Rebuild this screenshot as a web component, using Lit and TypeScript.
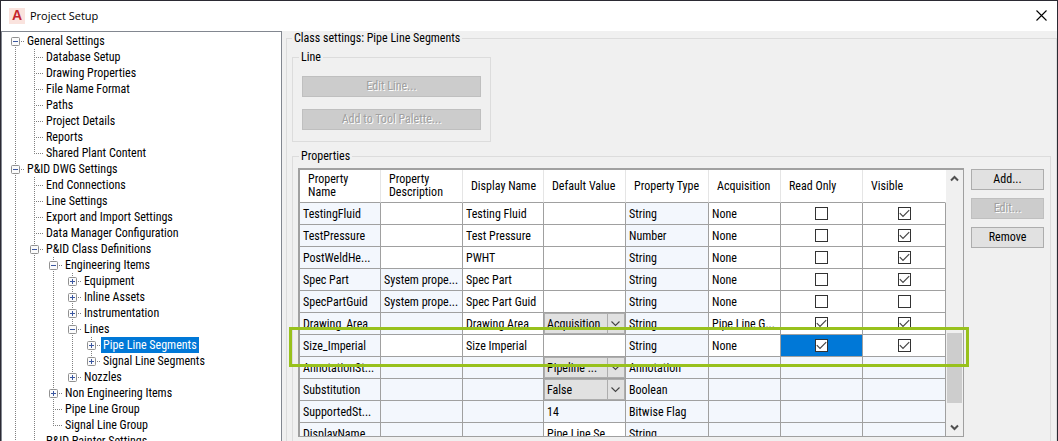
import { LitElement, html, svg, css, nothing } from 'lit';
import { customElement, state } from 'lit/decorators.js';
import { classMap } from 'lit/directives/class-map.js';

interface TreeItem {
  label: string;
  open?: boolean;
  expandable?: boolean;
  selected?: boolean;
  more?: boolean;
  children?: TreeItem[];
}

interface Choice {
  choice: string;
}

interface PropertyRow {
  name: string;
  description?: string;
  display?: string;
  value?: string | Choice;
  type: string;
  acquisition?: string;
  readOnly?: boolean;
  visible?: boolean;
  /* columns that cannot be edited, by index */
  locked: number[];
  current?: boolean;
}

const leaf = (label: string): TreeItem => ({ label });
const closed = (label: string): TreeItem => ({ label, expandable: true });

const TREE: TreeItem[] = [
  {
    label: 'General Settings',
    open: true,
    children: [
      'Database Setup',
      'Drawing Properties',
      'File Name Format',
      'Paths',
      'Project Details',
      'Reports',
      'Shared Plant Content',
    ].map(leaf),
  },
  {
    label: 'P&ID DWG Settings',
    open: true,
    more: true,
    children: [
      leaf('End Connections'),
      leaf('Line Settings'),
      leaf('Export and Import Settings'),
      leaf('Data Manager Configuration'),
      {
        label: 'P&ID Class Definitions',
        open: true,
        children: [
          {
            label: 'Engineering Items',
            open: true,
            children: [
              closed('Equipment'),
              closed('Inline Assets'),
              closed('Instrumentation'),
              {
                label: 'Lines',
                open: true,
                children: [
                  { label: 'Pipe Line Segments', expandable: true, selected: true },
                  closed('Signal Line Segments'),
                ],
              },
              closed('Nozzles'),
            ],
          },
          closed('Non Engineering Items'),
          leaf('Pipe Line Group'),
          leaf('Signal Line Group'),
        ],
      },
      { label: 'P&ID Painter Settings', more: true },
    ],
  },
];

const COLUMNS = [
  { title: 'Property Name', width: 81 },
  { title: 'Property Description', width: 82 },
  { title: 'Display Name', width: 81 },
  { title: 'Default Value', width: 82 },
  { title: 'Property Type', width: 83 },
  { title: 'Acquisition', width: 72 },
  { title: 'Read Only', width: 82 },
  { title: 'Visible', width: 83 },
];

const ROWS: PropertyRow[] = [
  { name: 'TestingFluid', display: 'Testing Fluid', type: 'String', acquisition: 'None', readOnly: false, visible: true, locked: [0, 4] },
  { name: 'TestPressure', display: 'Test Pressure', type: 'Number', acquisition: 'None', readOnly: false, visible: true, locked: [0, 4] },
  { name: 'PostWeldHe...', display: 'PWHT', type: 'String', acquisition: 'None', readOnly: false, visible: true, locked: [0, 4] },
  { name: 'Spec Part', description: 'System prope...', display: 'Spec Part', type: 'String', acquisition: 'None', readOnly: false, visible: true, locked: [0, 1, 4] },
  { name: 'SpecPartGuid', description: 'System prope...', display: 'Spec Part Guid', type: 'String', acquisition: 'None', readOnly: false, visible: false, locked: [0, 1, 4] },
  { name: 'Drawing_Area', display: 'Drawing Area', value: { choice: 'Acquisition' }, type: 'String', acquisition: 'Pipe Line G...', readOnly: true, visible: true, locked: [0, 1, 4] },
  { name: 'Size_Imperial', display: 'Size Imperial', type: 'String', acquisition: 'None', readOnly: true, visible: true, locked: [0, 4], current: true },
  { name: 'AnnotationSt...', value: { choice: 'Pipeline ...' }, type: 'Annotation', locked: [0, 1, 2, 4, 5, 6, 7] },
  { name: 'Substitution', value: { choice: 'False' }, type: 'Boolean', locked: [0, 1, 2, 4, 5, 6, 7] },
  { name: 'SupportedSt...', value: '14', type: 'Bitwise Flag', locked: [0, 1, 2, 3, 4, 5, 6, 7] },
  { name: 'DisplayName', value: 'Pipe Line Se...', type: 'String', locked: [0, 1, 2, 4, 5, 6, 7] },
];

const base = css`
  * {
    box-sizing: border-box;
  }
  button,
  select {
    font: inherit;
    color: inherit;
  }
`;

@customElement('title-bar')
class TitleBar extends LitElement {
  static styles = [
    base,
    css`
      :host {
        display: flex;
        align-items: center;
        height: 30px;
        padding: 0 5px 0 8px;
        background: #fff;
        font-family: 'Open Sans', 'Noto Sans', sans-serif;
        font-size: 11px;
      }
      .logo {
        width: 16px;
        height: 16px;
        margin-right: 5px;
        background: #fae3de;
        color: #c4262e;
        font: bold 14px/14px 'Liberation Sans', Arial, sans-serif;
        text-align: center;
      }
      .title {
        flex: 1;
        margin: 0;
        font-size: 11px;
        font-weight: 400;
        line-height: 14px;
      }
      .close {
        display: flex;
        padding: 4px 5px 6px;
        border: 0;
        background: none;
      }
    `,
  ];

  render() {
    return html`
      <span class="logo" aria-hidden="true">A</span>
      <h1 class="title">Project Setup</h1>
      <button class="close" aria-label="Close">
        <svg width="11" height="11" viewBox="0 0 11 11" stroke="#000" stroke-width="1.1" fill="none">
          <path d="M.5 .5 10.5 10.5M10.5 .5 .5 10.5" />
        </svg>
      </button>
    `;
  }
}

@customElement('settings-tree')
class SettingsTree extends LitElement {
  static styles = [
    base,
    css`
      :host {
        display: block;
        overflow: hidden;
        padding: 1px 0 0 4px;
        background: #fff;
        border: 1px solid #828790;
      }
      ul {
        margin: 0;
        padding: 0;
        list-style: none;
      }
      .row {
        display: flex;
        height: 16px;
        line-height: 16px;
        white-space: nowrap;
      }
      .guide {
        flex: none;
        width: 19px;
        height: 16px;
      }
      .dots {
        stroke: #808080;
        stroke-dasharray: 1 1;
      }
      .label {
        padding: 0 2px;
      }
      .selected {
        background: #0078d7;
        color: #fff;
      }
    `,
  ];

  private guide(item: TreeItem, first: boolean, last: boolean) {
    const box = item.open || item.expandable;
    return html`<svg class="guide" viewBox="0 0 19 16" aria-hidden="true">
      <g class="dots">
        ${first ? nothing : svg`<path d="M9.5 0V8" />`}
        ${last ? nothing : svg`<path d="M9.5 8V16" />`}
        <path d="M9 8.5H19" />
      </g>
      ${box
        ? svg`<rect x="5.5" y="4.5" width="8" height="8" rx="1" fill="#fbfbfb" stroke="#919191" />
            <path d="M7 8.5H12" stroke="#3b57a0" />`
        : nothing}
      ${item.expandable ? svg`<path d="M9.5 6V11" stroke="#3b57a0" />` : nothing}
    </svg>`;
  }

  private branch(items: TreeItem[], trail: boolean[]): unknown {
    return html`<ul>
      ${items.map((item, i) => {
        const last = i === items.length - 1 && !item.more;
        const first = i === 0 && trail.length === 0;
        return html`<li>
          <div class="row">
            ${trail.map(
              (runs) => html`<svg class="guide" viewBox="0 0 19 16" aria-hidden="true">
                ${runs ? svg`<path class="dots" d="M9.5 0V16" />` : nothing}
              </svg>`,
            )}
            ${this.guide(item, first, last)}
            <span class=${classMap({ label: true, selected: !!item.selected })}>${item.label}</span>
          </div>
          ${item.children ? this.branch(item.children, [...trail, !last]) : nothing}
        </li>`;
      })}
    </ul>`;
  }

  render() {
    return this.branch(TREE, []);
  }
}

@customElement('property-grid')
class PropertyGrid extends LitElement {
  static styles = [
    base,
    css`
      :host {
        display: flex;
        position: relative;
        height: 269px;
        border: 1px solid #a0a0a0;
        border-width: 2px 1px 1px 2px;
        background: #fff;
      }
      .viewport {
        flex: 1;
        min-width: 0;
        overflow: hidden;
      }
      table {
        width: 100%;
        table-layout: fixed;
        border-collapse: separate;
        border-spacing: 0;
      }
      th {
        height: 33px;
        padding: 0 4px 0 8px;
        border-right: 1px solid #e5e5e5;
        border-bottom: 1px solid #a0a0a0;
        font-weight: 400;
        line-height: 13px;
        text-align: left;
        vertical-align: middle;
      }
      th:last-child {
        border-right-color: #fff;
      }
      td {
        height: 22px;
        padding: 0 3px;
        border-right: 1px solid #a0a0a0;
        border-bottom: 1px solid #a0a0a0;
        line-height: 20px;
        white-space: nowrap;
        overflow: hidden;
      }
      .locked {
        background: #f3f7fd;
      }
      .tick,
      .picker {
        padding: 0;
      }
      .chosen {
        background: #0078d7;
      }
      input {
        display: block;
        appearance: none;
        width: 13px;
        height: 13px;
        margin: 0 auto;
        border: 1px solid #333;
        background: #fff;
      }
      input:checked {
        background: #fff
          url("data:image/svg+xml,%3Csvg xmlns='http://www.w3.org/2000/svg' viewBox='0 0 11 11'%3E%3Cpath d='M.8 5.2 4 8.4 10.2 2.2' fill='none' stroke='%23444' stroke-width='1.2'/%3E%3C/svg%3E");
      }
      select {
        display: block;
        appearance: none;
        width: 100%;
        height: 21px;
        padding: 0 18px 0 2px;
        border: 1px solid #adadad;
        border-radius: 0;
        background:
          url("data:image/svg+xml,%3Csvg xmlns='http://www.w3.org/2000/svg' viewBox='0 0 17 19'%3E%3Cpath d='M.5 0V19' stroke='%23adadad'/%3E%3Cpath d='M4.5 7.5 8.5 11.5 12.5 7.5' fill='none' stroke='%23444' stroke-width='1.1'/%3E%3C/svg%3E")
            right / 17px 19px no-repeat,
          #e1e1e1;
      }
      .scrollbar {
        display: flex;
        flex-direction: column;
        width: 17px;
        padding: 0 1px;
        background: #f0f0f0;
      }
      .arrow {
        display: grid;
        place-items: center;
        height: 17px;
        padding: 0;
        border: 0;
        background: none;
      }
      .track {
        flex: 1;
        display: grid;
        grid-template-rows: 146fr 70fr 16fr;
      }
      .thumb {
        grid-row: 2;
        background: #cdcdcd;
      }
      .highlight {
        position: absolute;
        top: 157px;
        left: -11px;
        right: -6px;
        height: 40px;
        border: 3px solid #98c11d;
        pointer-events: none;
      }
    `,
  ];

  @state() private rows = ROWS;

  private cellClass(row: PropertyRow, column: number, extra = '') {
    return `${extra} ${row.locked.includes(column) ? 'locked' : ''}`;
  }

  private tick(row: PropertyRow, column: number, checked: boolean | undefined, chosen: boolean) {
    return html`<td class=${this.cellClass(row, column, chosen ? 'tick chosen' : 'tick')}>
      ${checked === undefined
        ? nothing
        : html`<input
            type="checkbox"
            aria-label="${row.name} ${COLUMNS[column].title}"
            .checked=${checked}
          />`}
    </td>`;
  }

  private value(row: PropertyRow) {
    const v = row.value;
    return typeof v === 'object'
      ? html`<td class=${this.cellClass(row, 3, 'picker')}>
          <select aria-label="${row.name} default value">
            <option>${v.choice}</option>
          </select>
        </td>`
      : html`<td class=${this.cellClass(row, 3)}>${v}</td>`;
  }

  private arrow(label: string, d: string) {
    return html`<button class="arrow" aria-label=${label}>
      <svg width="9" height="7" viewBox="0 0 9 7" fill="none" stroke="#505050" stroke-width="2">
        <path d=${d} />
      </svg>
    </button>`;
  }

  render() {
    return html`
      <div class="viewport">
        <table>
          <colgroup>
            ${COLUMNS.map((c) => html`<col width=${c.width} />`)}
          </colgroup>
          <thead>
            <tr>
              ${COLUMNS.map((c) => html`<th scope="col">${c.title}</th>`)}
            </tr>
          </thead>
          <tbody>
            ${this.rows.map(
              (row) => html`<tr>
                <td class=${this.cellClass(row, 0)}>${row.name}</td>
                <td class=${this.cellClass(row, 1)}>${row.description}</td>
                <td class=${this.cellClass(row, 2)}>${row.display}</td>
                ${this.value(row)}
                <td class=${this.cellClass(row, 4)}>${row.type}</td>
                <td class=${this.cellClass(row, 5)}>${row.acquisition}</td>
                ${this.tick(row, 6, row.readOnly, !!row.current)}
                ${this.tick(row, 7, row.visible, false)}
              </tr>`,
            )}
          </tbody>
        </table>
      </div>
      <div class="scrollbar">
        ${this.arrow('Scroll up', 'M1 5.5 4.5 2 8 5.5')}
        <div class="track"><div class="thumb"></div></div>
        ${this.arrow('Scroll down', 'M1 1.5 4.5 5 8 1.5')}
      </div>
      <div class="highlight"></div>
    `;
  }
}

@customElement('app-root')
class AppRoot extends LitElement {
  static styles = [
    base,
    css`
      :host {
        display: block;
        color: #000;
        font-family: 'Roboto Condensed', 'Liberation Sans Narrow', Roboto, sans-serif;
        font-size: 12px;
      }
      .window {
        display: flex;
        flex-direction: column;
        height: 100vh;
        overflow: hidden;
        border: 1px solid #2b2a33;
        border-bottom: 0;
        background: #f0f0f0;
      }
      .body {
        flex: 1;
        display: flex;
        min-height: 0;
      }
      settings-tree {
        flex: none;
        width: 281px;
        border-bottom: 0;
      }
      .settings {
        flex: 1;
        min-width: 0;
        padding: 0 0 0 4px;
      }
      fieldset {
        min-width: 0;
        margin: 0;
        padding: 0;
        border: 1px solid #dcdcdc;
      }
      legend {
        padding: 0 2px;
        line-height: 14px;
      }
      .class-settings {
        min-height: 480px;
        padding: 5px 5px 0;
      }
      .line {
        width: 199px;
        margin-bottom: 7px;
        padding: 12px 0 11px 6px;
      }
      .stack {
        display: flex;
        flex-direction: column;
        gap: 12px;
        padding: 0 9px 0 3px;
      }
      .properties {
        min-height: 320px;
        padding: 5px 6px 0;
      }
      .columns {
        display: flex;
        gap: 7px;
        margin-left: -1px;
      }
      property-grid {
        flex: 1;
        min-width: 0;
      }
      .actions {
        flex: none;
        display: flex;
        flex-direction: column;
        gap: 8px;
        width: 73px;
        padding-top: 1px;
      }
      .button {
        height: 21px;
        padding: 0;
        border: 1px solid #adadad;
        background: #e1e1e1;
        line-height: 19px;
      }
      .button:disabled {
        border-color: #bfbfbf;
        background: #ccc;
        color: #a0a0a0;
        text-shadow: 1px 1px 0 #fff;
      }
    `,
  ];

  render() {
    return html`
      <main class="window">
        <title-bar></title-bar>
        <div class="body">
          <settings-tree></settings-tree>
          <div class="settings">
            <fieldset class="class-settings">
              <legend>Class settings: Pipe Line Segments</legend>
              <fieldset class="line">
                <legend>Line</legend>
                <div class="stack">
                  <button class="button" disabled>Edit Line...</button>
                  <button class="button" disabled>Add to Tool Palette...</button>
                </div>
              </fieldset>
              <fieldset class="properties">
                <legend>Properties</legend>
                <div class="columns">
                  <property-grid></property-grid>
                  <div class="actions">
                    <button class="button">Add...</button>
                    <button class="button" disabled>Edit...</button>
                    <button class="button">Remove</button>
                  </div>
                </div>
              </fieldset>
            </fieldset>
          </div>
        </div>
      </main>
    `;
  }
}
